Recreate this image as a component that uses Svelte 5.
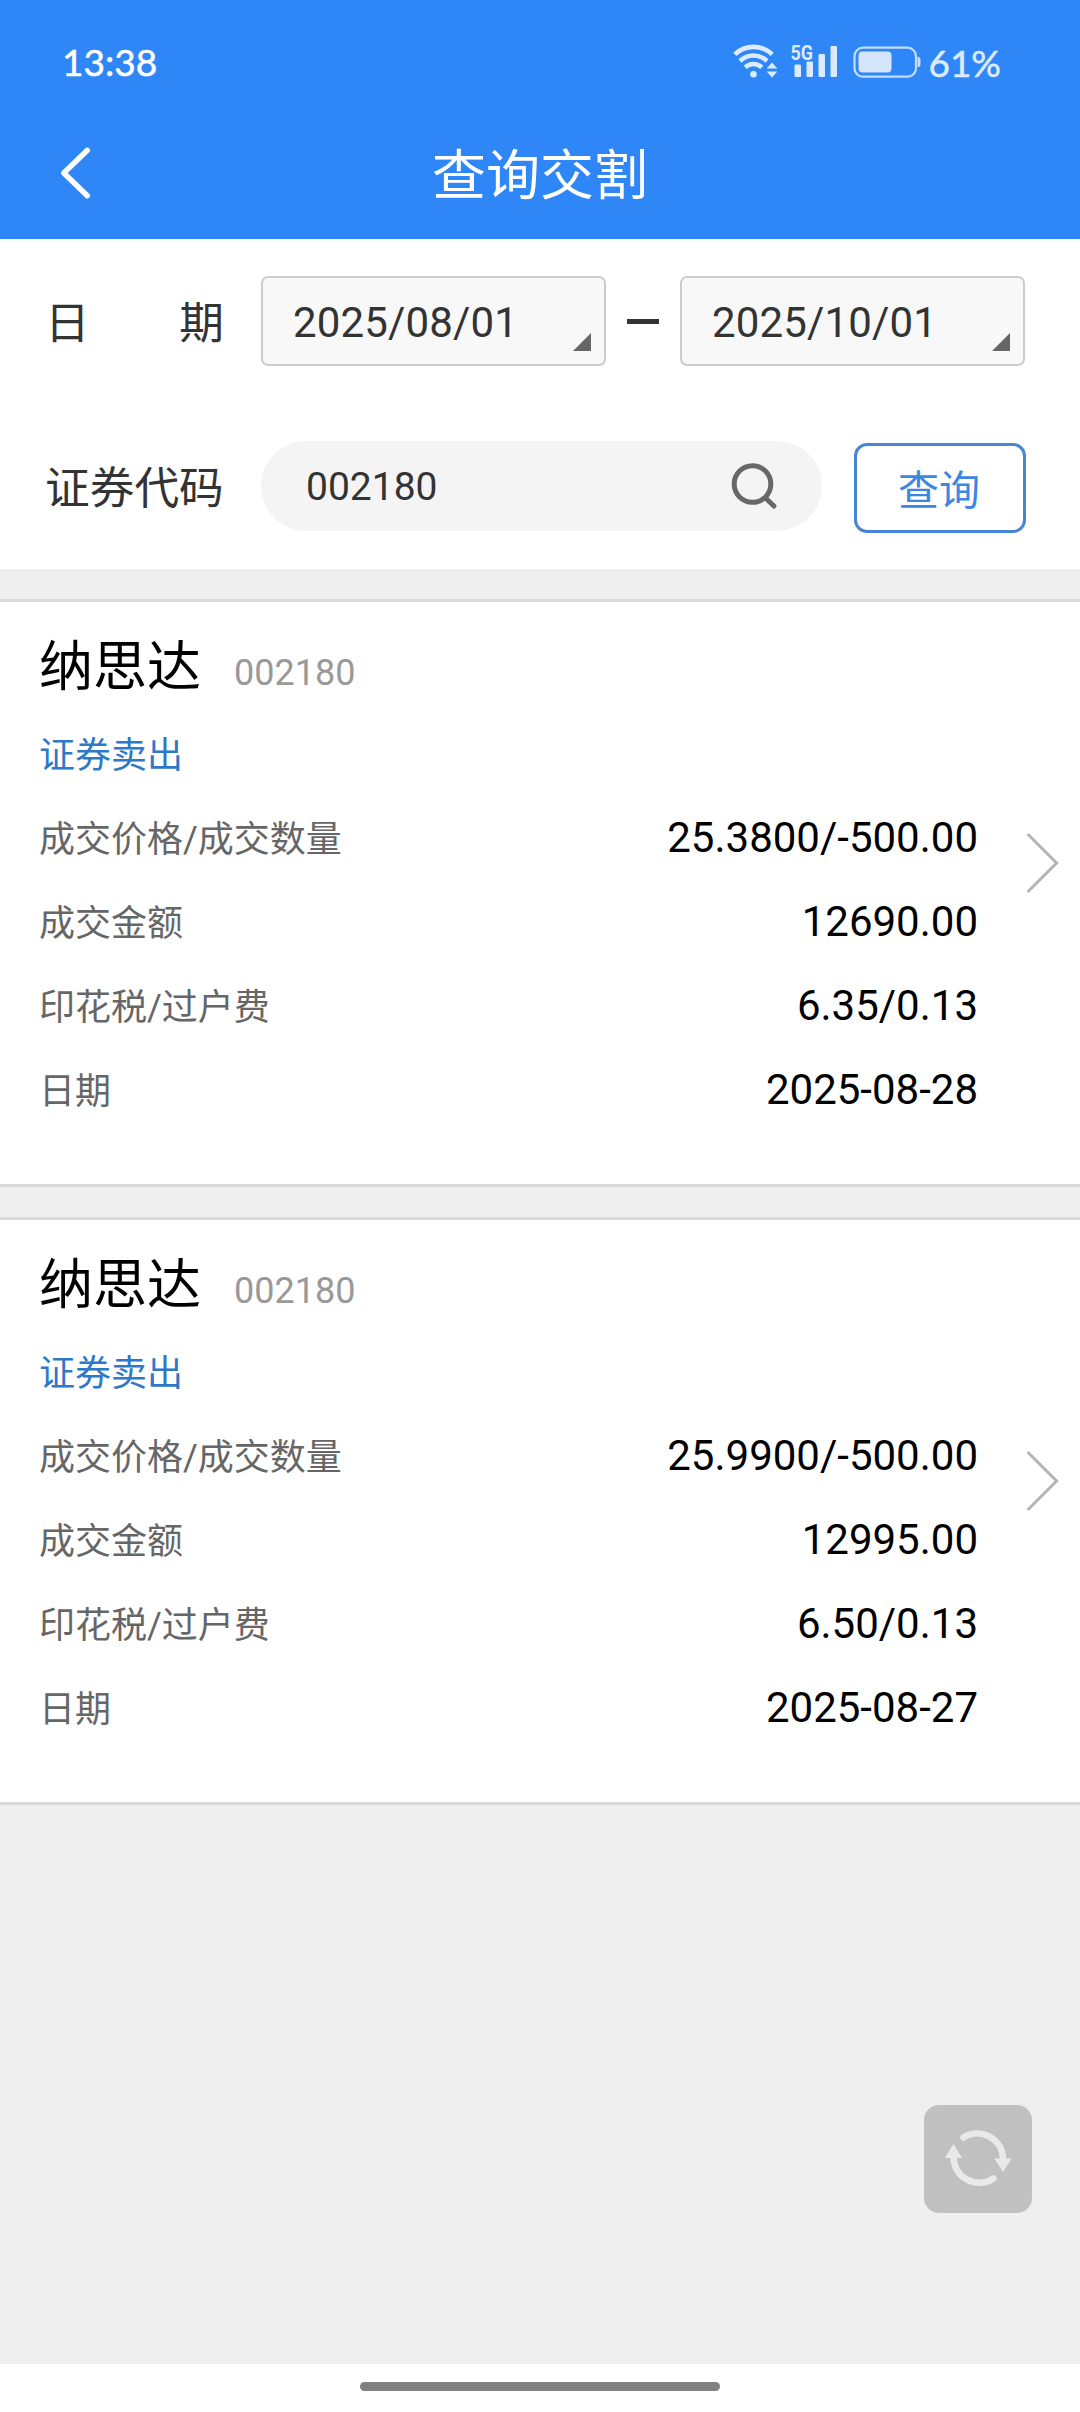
<script lang="ts">
	let desde = '2025/08/01';
	let hasta = '2025/10/01';
	let codigo = '002180';

	const registros = [
		{
			nombre: '纳思达',
			codigo: '002180',
			tipo: '证券卖出',
			filas: [
				['成交价格/成交数量', '25.3800/-500.00'],
				['成交金额', '12690.00'],
				['印花税/过户费', '6.35/0.13'],
				['日期', '2025-08-28']
			]
		},
		{
			nombre: '纳思达',
			codigo: '002180',
			tipo: '证券卖出',
			filas: [
				['成交价格/成交数量', '25.9900/-500.00'],
				['成交金额', '12995.00'],
				['印花税/过户费', '6.50/0.13'],
				['日期', '2025-08-27']
			]
		}
	];
</script>

<div class="page">
	<header>
		<div class="status">
			<span class="time">13:38</span>
			<svg class="status-icons" width="190" height="52" viewBox="0 -8 190 52">
				<!-- wifi -->
				<g fill="none" stroke="#dcebff" stroke-width="4.6">
					<path d="M1.8 11.4a27 27 0 0 1 37.4 0" />
					<path d="M7 18a19.5 19.5 0 0 1 27 0" />
					<path d="M12.2 24.4a12 12 0 0 1 16.6 0" />
				</g>
				<circle cx="20.5" cy="31.2" r="3.3" fill="#dcebff" />
				<path d="M33.7 25.6l5.3-6 5.3 6zM33.7 28.6l5.3 6 5.3-6z" fill="#dcebff" />
				<!-- signal -->
				<text x="57.4" y="17" textLength="22.5" lengthAdjust="spacingAndGlyphs">5G</text>
				<g fill="#dcebff">
					<rect x="61.5" y="21.5" width="6.5" height="12.5" rx="1.2" />
					<rect x="73.5" y="18.5" width="6.5" height="15.5" rx="1.2" />
					<rect x="85.5" y="11" width="6.5" height="23" rx="1.2" />
					<rect x="97.5" y="3" width="6.5" height="31" rx="1.2" />
				</g>
				<!-- battery -->
				<rect x="121.5" y="4.7" width="61.5" height="29" rx="8.5" fill="none" stroke="#c3dcfd" stroke-width="2.2" />
				<rect x="125.5" y="8.5" width="33" height="21" rx="4" fill="#d5e5fe" />
				<path d="M184.5 13.7q3 0 3 3v4.6q0 3-3 3z" fill="#c3dcfd" />
			</svg>
			<span class="percent">61%</span>
		</div>
		<div class="title-bar">
			<svg class="back" width="32" height="52" viewBox="0 0 32 52">
				<path d="M27.3 3.3L3.8 26l23.5 22.7" fill="none" stroke="#fff" stroke-width="5.4" stroke-linecap="round" stroke-linejoin="round" />
			</svg>
			<h1>查询交割</h1>
		</div>
	</header>

	<section class="filters">
		<div class="row fechas">
			<span class="label split"><span>日</span><span>期</span></span>
			<button class="date"><span>{desde}</span><i class="corner"></i></button>
			<span class="dash"></span>
			<button class="date"><span>{hasta}</span><i class="corner"></i></button>
		</div>
		<div class="row buscar">
			<span class="label">证券代码</span>
			<div class="search">
				<span>{codigo}</span>
				<svg width="48" height="48" viewBox="0 0 48 48" fill="none" stroke="#686868" stroke-width="5">
					<circle cx="21.5" cy="22" r="18.3" />
					<path d="M34.5 36l8.4 8" stroke-linecap="round" />
				</svg>
			</div>
			<button class="query">查询</button>
		</div>
	</section>

	<main>
		{#each registros as r}
			<article class="card">
				<div class="info">
					<div class="heading">
						<span class="name">{r.nombre}</span>
						<span class="code">{r.codigo}</span>
					</div>
					<div class="kind">{r.tipo}</div>
					{#each r.filas as [etiqueta, valor]}
						<div class="line">
							<span>{etiqueta}</span>
							<b>{valor}</b>
						</div>
					{/each}
				</div>
				<svg class="arrow" width="34" height="62" viewBox="0 0 34 62">
					<path d="M1.6 2L30.6 31l-29 29" fill="none" stroke="#b4b4b4" stroke-width="3" />
				</svg>
			</article>
		{/each}
	</main>

	<button class="refresh" aria-label="refresh">
		<svg width="70" height="62" viewBox="0 0 70 62">
			<g fill="none" stroke="#e9e9e9" stroke-width="6.6" stroke-linecap="round">
				<path d="M20.5 9.5A25.8 25.8 0 0 1 60 31" />
				<path d="M50.5 50.5A25.8 25.8 0 0 1 10.5 28" />
			</g>
			<path d="M51.3 30.5h17.4L60 44zM1.8 30h17.4L10.5 16z" fill="#e9e9e9" />
		</svg>
	</button>

	<footer><span class="home"></span></footer>
</div>

<style>
	:global(body) {
		margin: 0;
	}

	.page {
		position: relative;
		display: flex;
		flex-direction: column;
		width: 1080px;
		height: 2412px;
		background: #efefef;
		font-family: Roboto, 'Noto Sans CJK SC', sans-serif;
		color: #333;
		overflow: hidden;
	}

	button {
		padding: 0;
		font: inherit;
		color: inherit;
		box-sizing: border-box;
	}

	header {
		height: 239px;
		background: #2f86f6;
		color: #fff;
	}

	.status {
		display: flex;
		align-items: center;
		height: 126px;
		padding: 0 79px 0 62px;
		font-family: Lato, sans-serif;
		font-size: 37px;
		-webkit-text-stroke: 0.5px;
	}

	.time {
		margin-top: -3px;
	}

	.status-icons {
		margin-left: auto;
		margin-top: -4px;
		-webkit-text-stroke: 0;
	}

	.status-icons text {
		font-family: Roboto, sans-serif;
		font-size: 21px;
		font-weight: 700;
		fill: #dcebff;
	}

	.percent {
		margin: -1px 0 0 5px;
		color: #dcebff;
	}

	.title-bar {
		display: grid;
		grid-template-columns: 1fr auto 1fr;
		align-items: center;
		height: 94px;
	}

	.back {
		margin-left: 60px;
	}

	h1 {
		margin: 8px 0 0;
		font-size: 54px;
		font-weight: 400;
		line-height: 80px;
	}

	.filters {
		height: 330px;
		background: #fff;
		box-sizing: border-box;
		padding: 37px 54px 0 45px;
	}

	.row {
		display: flex;
		align-items: center;
		height: 90px;
	}

	.label {
		width: 179px;
		margin: -3px 37px 0 0;
		font-size: 44.7px;
		white-space: nowrap;
	}

	.split {
		display: flex;
		justify-content: space-between;
	}

	.date {
		display: flex;
		justify-content: space-between;
		align-items: center;
		width: 345px;
		height: 90px;
		padding: 2px 13px 0 30px;
		border: 2px solid #ccc;
		border-radius: 7px;
		background: #f8f8f8;
		font-size: 42px;
		letter-spacing: 0.15px;
	}

	.corner {
		align-self: flex-end;
		width: 18px;
		height: 18px;
		margin-bottom: 13px;
		background: #666;
		clip-path: polygon(100% 0, 100% 100%, 0 100%);
	}

	.dash {
		width: 32px;
		height: 5px;
		margin: 0 21px;
		background: #333;
	}

	.buscar {
		margin-top: 75px;
	}

	.search {
		display: flex;
		justify-content: space-between;
		align-items: center;
		width: 561px;
		height: 90px;
		box-sizing: border-box;
		padding: 2px 43px 0 45px;
		border-radius: 45px;
		background: #f4f4f4;
		font-size: 39px;
	}

	.search svg {
		margin-top: -3px;
	}

	.query {
		width: 172px;
		height: 90px;
		margin: 4px 0 0 32px;
		padding: 0 2px 2px 0;
		border: 3px solid #4785d6;
		border-radius: 13px;
		background: #fff;
		color: #3c86e4;
		font-size: 41px;
	}

	main {
		flex: 1;
		display: flex;
		flex-direction: column;
		gap: 30px;
		padding-top: 30px;
	}

	.card {
		display: flex;
		height: 582px;
		border-top: 3px solid #d9d9d9;
		border-bottom: 3px solid #d9d9d9;
		background: #fff;
	}

	.info {
		width: 939px;
		padding: 26px 0 0 39px;
	}

	.heading {
		display: flex;
		align-items: baseline;
		height: 86px;
		line-height: 80px;
		color: #999;
		font-size: 36px;
	}

	.name {
		margin-right: 33px;
		color: #000;
		font-size: 54px;
	}

	.code {
		transform: translateY(-1px);
	}

	.kind {
		height: 84px;
		line-height: 84px;
		color: #2d79c7;
		font-size: 36px;
	}

	.line {
		display: flex;
		justify-content: space-between;
		height: 84px;
		line-height: 84px;
		color: #666;
		font-size: 36px;
	}

	.line b {
		margin-top: -2px;
		color: #000;
		font-size: 42px;
		font-weight: 400;
	}

	.arrow {
		margin: 230px 0 0 48px;
	}

	.refresh {
		position: absolute;
		right: 48px;
		bottom: 199px;
		display: flex;
		align-items: center;
		justify-content: center;
		width: 108px;
		height: 108px;
		border: none;
		border-radius: 15px;
		background: #c0c0c0;
	}

	footer {
		display: flex;
		justify-content: center;
		height: 48px;
		background: #fff;
	}

	.home {
		width: 360px;
		height: 9px;
		margin-top: 18px;
		border-radius: 5px;
		background: #808080;
	}
</style>
